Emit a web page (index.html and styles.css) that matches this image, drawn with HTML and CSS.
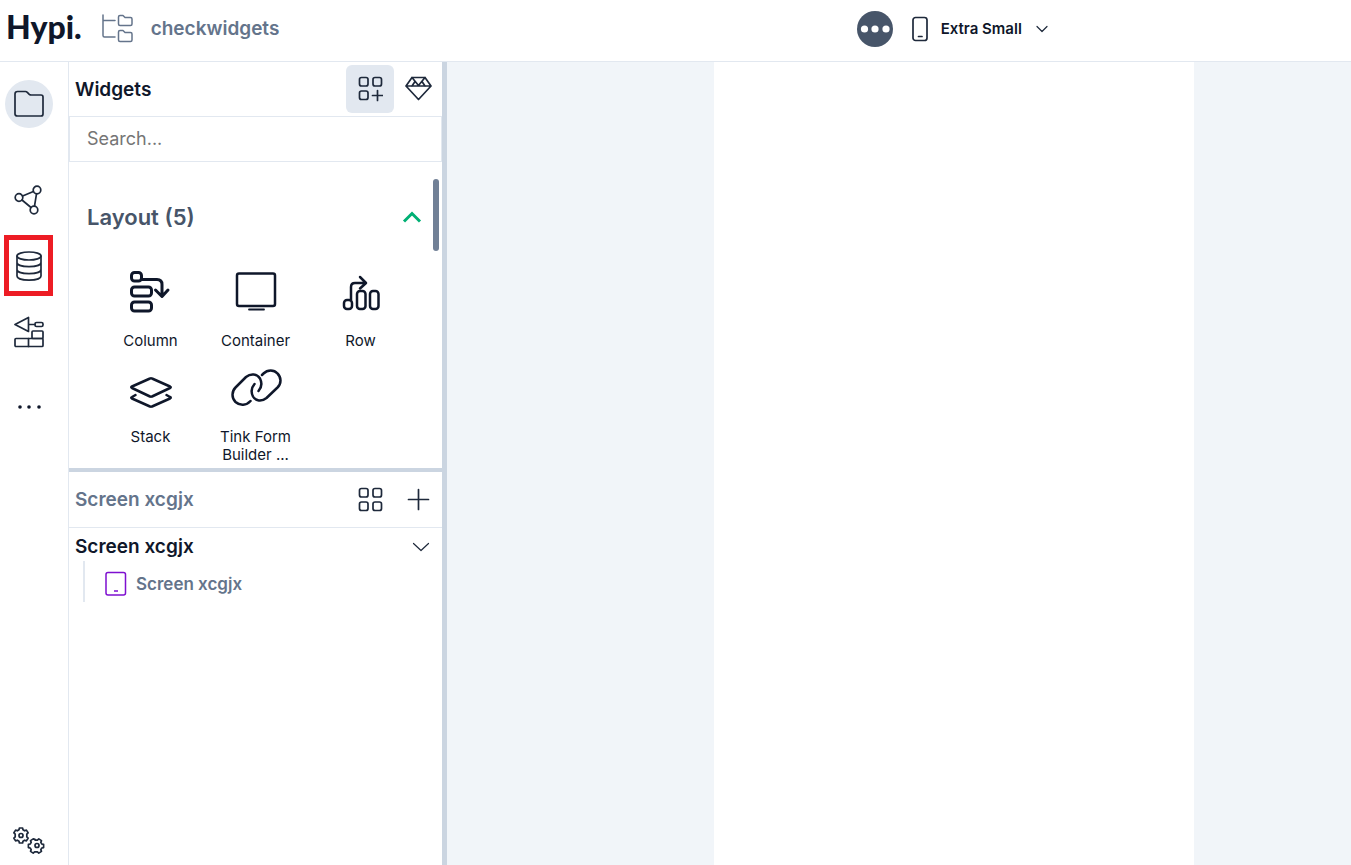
FILE: index.html
```html
<!DOCTYPE html>
<html lang="en">
<head>
    <meta charset="UTF-8">
    <meta name="viewport" content="width=device-width, initial-scale=1.0">
    <title>Hypi - checkwidgets</title>
    <link rel="stylesheet" href="styles.css">
</head>
<body>
    <header class="topbar">
        <div class="topbar-left">
            <a href="#" class="logo">Hypi.</a>
            <svg class="icon project-icon" width="32" height="30" viewBox="0 0 32 30">
                <path d="M1 1v20.500q0 1.500 1.500 1.500H13M1 6.500h12"/>
                <path d="M16.500 3q0-1.500 1.500-1.500h3l2 2h5.500q1.500 0 1.500 1.500v5q0 1.500-1.500 1.500H18q-1.500 0-1.500-1.500z"/>
                <path d="M16.500 18q0-1.500 1.500-1.500h3l2 2h5.500q1.500 0 1.500 1.500v6q0 1.500-1.500 1.500H18q-1.500 0-1.500-1.500z"/>
            </svg>
            <span class="project-name">checkwidgets</span>
        </div>
        <div class="topbar-right">
            <button class="more-btn" aria-label="More">
                <svg width="36" height="36" viewBox="0 0 36 36" fill="#fff">
                    <circle cx="7.500" cy="18" r="3.600"/><circle cx="18" cy="18" r="3.600"/><circle cx="29" cy="18" r="3.600"/>
                </svg>
            </button>
            <label class="device">
                <svg class="icon" width="16" height="26" viewBox="0 0 16 26">
                    <rect x="1" y="1.500" width="14" height="23" rx="2.500"/>
                    <path d="M6.500 20.500h3.500"/>
                </svg>
                <select class="device-select" aria-label="Screen size">
                    <option>Extra Small</option>
                </select>
                <svg class="icon thin" width="12" height="8" viewBox="0 0 12 8">
                    <path d="M1 1.500l5 5 5-5"/>
                </svg>
            </label>
        </div>
    </header>

    <div class="workspace">
        <nav class="sidebar">
            <button class="nav-btn active" aria-label="Files">
                <svg class="icon" width="30" height="28" viewBox="0 0 30 28">
                    <path d="M1 4q0-2.500 2.500-2.500h8q1 0 1.800.8l2 2q.8.700 2 .700H27q2 0 2 2v17q0 2-2 2H3.500q-2.500 0-2.500-2z"/>
                </svg>
            </button>
            <button class="nav-btn" aria-label="Graph">
                <svg class="icon" width="30" height="32" viewBox="0 0 30 32">
                    <circle cx="5" cy="13.500" r="3.800"/><circle cx="23" cy="6" r="3.800"/><circle cx="20" cy="26" r="3.800"/>
                    <path d="M8.600 12l10.800-4.500M22.500 9.800l-2 12.400M8 16l9 7.500"/>
                </svg>
            </button>
            <button class="nav-btn highlighted" aria-label="Database">
                <svg class="icon" width="28" height="32" viewBox="0 0 28 32">
                    <ellipse cx="14" cy="6" rx="12" ry="4"/>
                    <path d="M2 6v20c0 5.500 24 5.500 24 0V6M2 12.500c0 5.500 24 5.500 24 0M2 19.500c0 5.500 24 5.500 24 0"/>
                </svg>
            </button>
            <button class="nav-btn" aria-label="Build">
                <svg class="icon" width="30" height="32" viewBox="0 0 30 32">
                    <path d="M1 8.500L14.500 1.500v14zM14.500 8.500h6.500"/>
                    <rect x="21" y="6.500" width="8" height="4" rx="1.500"/>
                    <rect x="18" y="15" width="11" height="7.500" rx="1"/>
                    <rect x="1" y="22.500" width="28" height="8" rx="1"/>
                    <path d="M14.500 22.500v8"/>
                </svg>
            </button>
            <button class="nav-btn dots" aria-label="More tools">
                <svg width="24" height="6" viewBox="0 0 24 6" fill="#0f172a">
                    <circle cx="3" cy="3" r="1.800"/><circle cx="12" cy="3" r="1.800"/><circle cx="22" cy="3" r="1.800"/>
                </svg>
            </button>
            <button class="nav-btn settings" aria-label="Settings">
                <svg class="icon" width="34" height="28" viewBox="0 0 34 28">
                    <path d="M7 2.800L7.400 1h3.200l.4 1.800 1.600 1 1.800-.7 1.700 2.700-1.300 1.400v2.600l1.300 1.400-1.700 2.700-1.800-.7-1.600 1-.4 1.800H7.400L7 14.200l-1.600-1-1.800.7-1.700-2.700 1.300-1.400V7.200L1.900 5.800l1.700-2.700 1.800.7z"/>
                    <circle cx="9" cy="8.500" r="2"/>
                    <path d="M23 12.300L21.200 11.900l-2.700 1.700.7 1.800-1 1.600-1.800.4v3.200l1.800.4 1 1.600-.7 1.800 2.700 1.700 1.400-1.300h2.800l1.400 1.300 2.700-1.700-.7-1.800 1-1.600 1.800-.4v-3.200l-1.800-.4-1-1.600.7-1.800-2.700-1.700-1.400 1.300h-2.200z"/>
                    <circle cx="25" cy="18.500" r="2"/>
                </svg>
            </button>
        </nav>

        <aside class="panel">
            <section class="widgets">
                <div class="panel-header">
                    <h2 class="panel-title">Widgets</h2>
                    <button class="tool-btn active" aria-label="Widgets">
                        <svg class="icon" width="26" height="26" viewBox="0 0 26 26">
                            <rect x="2.500" y="1.500" width="8.500" height="8.500" rx="2"/>
                            <rect x="16" y="1.500" width="8.500" height="8.500" rx="2"/>
                            <rect x="2.500" y="15" width="8.500" height="8.500" rx="2"/>
                            <path d="M20.500 14.500v10M15.500 19.500h10"/>
                        </svg>
                    </button>
                    <button class="tool-btn" aria-label="Premium">
                        <svg class="icon" width="28" height="26" viewBox="0 0 28 26">
                            <path d="M8 1.500h13l6 8.500L14.500 23.500 2 10zM2 10h25M8 1.500L14.500 9.500 21 1.500M8 10l3-4.500M21 10l-3-4.500"/>
                        </svg>
                    </button>
                </div>
                <input class="search" type="text" placeholder="Search..." aria-label="Search">
                <div class="widget-list">
                    <button class="group-header">
                        <span>Layout (5)</span>
                        <svg width="20" height="14" viewBox="0 0 20 14" fill="none" stroke="#00b074" stroke-width="3">
                            <path d="M2 11.500l8-8 8 8"/>
                        </svg>
                    </button>
                    <div class="widget-grid">
                        <button class="widget">
                            <svg class="icon bold" width="52" height="56" viewBox="0 0 52 56">
                                <rect x="6.500" y="8.500" width="10" height="8.500" rx="3"/>
                                <rect x="6.500" y="23" width="20" height="9" rx="3"/>
                                <rect x="6.500" y="38" width="20" height="9" rx="3"/>
                                <path d="M17 15.500h15q5 0 5 5V32M30.500 26l6.500 6.500 6-6.500"/>
                            </svg>
                            <span>Column</span>
                        </button>
                        <button class="widget">
                            <svg class="icon mid" width="52" height="56" viewBox="0 0 52 56">
                                <rect x="7" y="9.500" width="38" height="32.500" rx="2"/>
                                <path d="M19 45.500h15" stroke-width="1.800"/>
                            </svg>
                            <span>Container</span>
                        </button>
                        <button class="widget">
                            <svg class="icon mid" width="52" height="56" viewBox="0 0 52 56">
                                <rect x="9" y="36" width="8" height="9" rx="3"/>
                                <rect x="22" y="27" width="8.500" height="18" rx="3"/>
                                <rect x="35" y="27" width="8.500" height="18" rx="3"/>
                                <path d="M16 36V23q0-4 4-4h10M25 13l6 6-6 5.500"/>
                            </svg>
                            <span>Row</span>
                        </button>
                        <button class="widget">
                            <svg class="icon mid" width="52" height="56" viewBox="0 0 52 56">
                                <path d="M25 18.500q1-.5 2 0l18 8q1.500.8 0 1.500l-18 8.500q-1 .5-2 0L7 28q-1.500-.8 0-1.500z"/>
                                <path d="M10.500 35L7 37q-1.500.8 0 1.500l18 8q1 .5 2 0l18-8q1.500-.8 0-1.500l-3.500-2"/>
                            </svg>
                            <span>Stack</span>
                        </button>
                        <button class="widget">
                            <svg class="icon mid" width="52" height="56" viewBox="0 0 52 56">
                                <path d="M20.500 41c-4 4.500-10.500 5-15 1-4-4-4-10.500 0-14.500L16 17c5-4 11-3 14 1.500 2.500 5 1.500 9-1.500 12.500"/>
                                <path d="M32 15l1.500-1.500c4-4 10.500-4 14 0 4 4 4 10 0 14L36.500 38c-5 4-11 3-13.500-1.500-2.500-5-1.500-9 1.500-12.500"/>
                            </svg>
                            <span>Tink Form Builder ...</span>
                        </button>
                    </div>
                    <div class="scroll-thumb"></div>
                </div>
            </section>

            <section class="screens">
                <div class="panel-header">
                    <h2 class="panel-title muted">Screen xcgjx</h2>
                    <button class="tool-btn" aria-label="Grid view">
                        <svg class="icon" width="26" height="26" viewBox="0 0 26 26">
                            <rect x="2.500" y="1.500" width="8.500" height="8.500" rx="2"/>
                            <rect x="16" y="1.500" width="8.500" height="8.500" rx="2"/>
                            <rect x="2.500" y="15" width="8.500" height="8.500" rx="2"/>
                            <rect x="16" y="15" width="8.500" height="8.500" rx="2"/>
                        </svg>
                    </button>
                    <button class="tool-btn" aria-label="Add screen">
                        <svg class="icon" width="24" height="24" viewBox="0 0 24 24">
                            <path d="M12.500 1.500v20M2.500 11.500h20"/>
                        </svg>
                    </button>
                </div>
                <button class="tree-root">
                    <span>Screen xcgjx</span>
                    <svg class="icon thin" width="18" height="12" viewBox="0 0 18 12">
                        <path d="M1.500 2.500L9 9.500l7.500-7"/>
                    </svg>
                </button>
                <ul class="tree">
                    <li>
                        <a href="#" class="tree-item">
                            <svg width="22" height="26" viewBox="0 0 22 26" fill="none" stroke="#7e0fd0" stroke-width="1.500">
                                <rect x="1" y="1.500" width="19.500" height="22.500" rx="2"/>
                                <path d="M9 20h4"/>
                            </svg>
                            Screen xcgjx
                        </a>
                    </li>
                </ul>
            </section>
        </aside>

        <main class="canvas">
            <div class="page"></div>
        </main>
    </div>
</body>
</html>
```
FILE: styles.css
```css
* {
    box-sizing: border-box;
}

body {
    margin: 0;
    height: 100vh;
    display: flex;
    flex-direction: column;
    font-family: Inter, "Liberation Sans", sans-serif;
    color: #0f172a;
    background-color: #fff;
    overflow: hidden;
}

button {
    display: flex;
    align-items: center;
    justify-content: center;
    padding: 0;
    border: none;
    background: none;
    font-family: inherit;
    color: inherit;
    cursor: pointer;
}

a {
    color: inherit;
    text-decoration: none;
}

.icon {
    flex-shrink: 0;
    fill: none;
    stroke: #1e293b;
    stroke-width: 1.7;
    stroke-linecap: round;
    stroke-linejoin: round;
}

.icon.thin {
    stroke-width: 1.2;
}

.icon.mid {
    stroke: #0f172a;
    stroke-width: 2.5;
}

.icon.bold {
    stroke: #0f172a;
    stroke-width: 3;
}

/* top bar */
.topbar {
    display: grid;
    grid-template-columns: 26fr 15fr;
    height: 62px;
    padding-bottom: 4px;
    border-bottom: 1px solid #e2e8f0;
    flex-shrink: 0;
}

.topbar-left {
    display: flex;
    align-items: center;
    padding-left: 6px;
}

.logo {
    padding-bottom: 4px;
    font-family: Lato, sans-serif;
    font-weight: 900;
    font-size: 32px;
    line-height: 40px;
}

.project-icon {
    margin: 0 17px 0 20px;
    stroke: #64748b;
    stroke-width: 1.5;
}

.project-name {
    font-size: 19px;
    font-weight: 600;
    color: #64748b;
}

.topbar-right {
    display: flex;
    align-items: center;
    gap: 19px;
}

.more-btn {
    width: 36px;
    height: 36px;
    border-radius: 50%;
    background-color: #475569;
}

.device {
    display: flex;
    align-items: center;
    gap: 13px;
}

.device-select {
    appearance: none;
    padding: 0;
    border: none;
    background: none;
    font-family: inherit;
    font-size: 15px;
    font-weight: 600;
    color: #0f172a;
}

/* workspace */
.workspace {
    flex: 1;
    display: flex;
    min-height: 0;
}

.sidebar {
    width: 69px;
    display: flex;
    flex-direction: column;
    gap: 18px;
    padding: 18px 0 0 5px;
    border-right: 1px solid #e2e8f0;
    flex-shrink: 0;
}

.nav-btn {
    position: relative;
    width: 48px;
    height: 48px;
    border-radius: 50%;
}

.nav-btn.active {
    margin-bottom: 30px;
    background-color: #e2e8f0;
}

.nav-btn.dots {
    margin-top: 9px;
}

.nav-btn.settings {
    margin-top: auto;
}

.nav-btn.highlighted::after {
    content: "";
    position: absolute;
    inset: -7px 0 -6px -1px;
    border: 5px solid #ed1c24;
}

.panel {
    width: 378px;
    display: flex;
    flex-direction: column;
    border-right: 5px solid #cbd5e1;
    flex-shrink: 0;
}

.widgets {
    display: flex;
    flex-direction: column;
    height: 410px;
    border-bottom: 4px solid #cbd5e1;
    flex-shrink: 0;
}

.panel-header {
    display: flex;
    align-items: center;
    height: 54px;
    padding-left: 6px;
    flex-shrink: 0;
}

.panel-title {
    flex: 1;
    margin: 0;
    font-size: 19px;
    font-weight: 600;
}

.panel-title.muted {
    color: #64748b;
}

.tool-btn {
    width: 48px;
    height: 48px;
    border-radius: 6px;
}

.tool-btn.active {
    background-color: #e2e8f0;
}

.search {
    width: 100%;
    height: 46px;
    padding: 0 17px 2px;
    border: 1px solid #e2e8f0;
    font-family: inherit;
    font-size: 18px;
    color: #0f172a;
    outline: none;
    flex-shrink: 0;
}

.search::placeholder {
    color: #757575;
}

.widget-list {
    position: relative;
    flex: 1;
    padding: 27px 20px 0 18px;
    overflow: hidden;
}

.group-header {
    width: 100%;
    height: 56px;
    justify-content: space-between;
    font-size: 22px;
    font-weight: 600;
    color: #475569;
}

.widget-grid {
    display: grid;
    grid-template-columns: repeat(3, 1fr);
    row-gap: 10px;
    padding: 19px 9px 0 11px;
}

.widget {
    flex-direction: column;
    justify-content: flex-start;
    gap: 12px;
    padding: 0 10px;
    font-size: 15px;
    line-height: 18px;
}

.scroll-thumb {
    position: absolute;
    top: 17px;
    right: 3px;
    width: 6px;
    height: 72px;
    border-radius: 3px;
    background-color: #718096;
}

/* screen tree */
.screens .panel-header {
    height: 56px;
    border-bottom: 1px solid #e2e8f0;
}

.tree-root {
    width: 100%;
    height: 33px;
    justify-content: space-between;
    padding: 4px 12px 0 6px;
    font-size: 19px;
    font-weight: 600;
}

.tree {
    margin: 0 0 0 14px;
    padding: 0 0 0 20px;
    border-left: 2px solid #e2e8f0;
    list-style: none;
}

.tree-item {
    display: flex;
    align-items: center;
    gap: 9px;
    height: 41px;
    padding-top: 4px;
    font-size: 17px;
    font-weight: 600;
    color: #64748b;
}

.canvas {
    flex: 1;
    display: grid;
    grid-template-columns: 17fr 480px 10fr;
    background-color: #f1f5f9;
}

.page {
    grid-column: 2;
    background-color: #fff;
}
```
